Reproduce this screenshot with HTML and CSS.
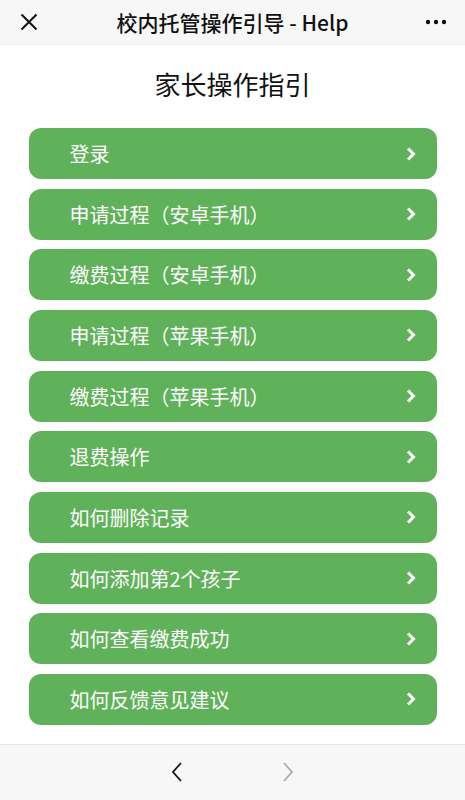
FILE: index.html
```html
<!DOCTYPE html>
<html lang="zh">
<head>
<meta charset="utf-8">
<link rel="stylesheet" href="styles.css">
</head>
<body>
<div class="page">
  <header class="topbar">
    <svg class="close" width="18" height="18" viewBox="0 0 18 18"><path d="M1.5 1.5 L16.5 16.5 M16.5 1.5 L1.5 16.5" stroke="#111" stroke-width="2" fill="none"/></svg>
    <div class="title">校内托管操作引导 - Help</div>
    <svg class="more" width="22" height="6" viewBox="0 0 22 6"><circle cx="3" cy="3" r="2.2" fill="#111"/><circle cx="11" cy="3" r="2.2" fill="#111"/><circle cx="19" cy="3" r="2.2" fill="#111"/></svg>
  </header>
  <main class="content">
    <h1 class="heading">家长操作指引</h1>
    <ul class="menu">
      <li class="item"><span>登录</span><svg class="chev" width="12" height="16" viewBox="0 0 12 16"><path d="M3 2.5 L8.5 8 L3 13.5" stroke="#fff" stroke-width="3" fill="none"/></svg></li>
      <li class="item"><span>申请过程（安卓手机）</span><svg class="chev" width="12" height="16" viewBox="0 0 12 16"><path d="M3 2.5 L8.5 8 L3 13.5" stroke="#fff" stroke-width="3" fill="none"/></svg></li>
      <li class="item"><span>缴费过程（安卓手机）</span><svg class="chev" width="12" height="16" viewBox="0 0 12 16"><path d="M3 2.5 L8.5 8 L3 13.5" stroke="#fff" stroke-width="3" fill="none"/></svg></li>
      <li class="item"><span>申请过程（苹果手机）</span><svg class="chev" width="12" height="16" viewBox="0 0 12 16"><path d="M3 2.5 L8.5 8 L3 13.5" stroke="#fff" stroke-width="3" fill="none"/></svg></li>
      <li class="item"><span>缴费过程（苹果手机）</span><svg class="chev" width="12" height="16" viewBox="0 0 12 16"><path d="M3 2.5 L8.5 8 L3 13.5" stroke="#fff" stroke-width="3" fill="none"/></svg></li>
      <li class="item"><span>退费操作</span><svg class="chev" width="12" height="16" viewBox="0 0 12 16"><path d="M3 2.5 L8.5 8 L3 13.5" stroke="#fff" stroke-width="3" fill="none"/></svg></li>
      <li class="item"><span>如何删除记录</span><svg class="chev" width="12" height="16" viewBox="0 0 12 16"><path d="M3 2.5 L8.5 8 L3 13.5" stroke="#fff" stroke-width="3" fill="none"/></svg></li>
      <li class="item"><span>如何添加第2个孩子</span><svg class="chev" width="12" height="16" viewBox="0 0 12 16"><path d="M3 2.5 L8.5 8 L3 13.5" stroke="#fff" stroke-width="3" fill="none"/></svg></li>
      <li class="item"><span>如何查看缴费成功</span><svg class="chev" width="12" height="16" viewBox="0 0 12 16"><path d="M3 2.5 L8.5 8 L3 13.5" stroke="#fff" stroke-width="3" fill="none"/></svg></li>
      <li class="item"><span>如何反馈意见建议</span><svg class="chev" width="12" height="16" viewBox="0 0 12 16"><path d="M3 2.5 L8.5 8 L3 13.5" stroke="#fff" stroke-width="3" fill="none"/></svg></li>
    </ul>
  </main>
  <footer class="bottombar">
    <svg class="nav" width="14" height="22" viewBox="0 0 14 22"><path d="M11 2 L3 11 L11 20" stroke="#111" stroke-width="1.8" fill="none"/></svg>
    <svg class="nav" width="14" height="22" viewBox="0 0 14 22"><path d="M3 2 L11 11 L3 20" stroke="#aaa" stroke-width="1.8" fill="none"/></svg>
  </footer>
</div>
</body>
</html>
```
FILE: styles.css
```css
* { box-sizing: border-box; }
html, body { margin: 0; padding: 0; }
body {
  font-family: "Noto Sans CJK SC", "Noto Sans", "Liberation Sans", sans-serif;
  background: #fff;
  width: 465px;
  height: 800px;
  overflow: hidden;
}
.page {
  display: flex;
  flex-direction: column;
  height: 800px;
}
.topbar {
  height: 45px;
  background: #f7f7f7;
  display: flex;
  align-items: center;
  padding: 0 18px 0 20px;
  border-bottom: 1px solid #ececec;
  flex-shrink: 0;
}
.close { flex-shrink: 0; }
.title {
  flex: 1;
  text-align: center;
  font-size: 21px;
  font-weight: 500;
  color: #111;
  padding-left: 2px;
}
.more { flex-shrink: 0; }
.content {
  flex: 1;
  display: flex;
  flex-direction: column;
  align-items: center;
}
.heading {
  margin: 24px 0 0;
  font-size: 26px;
  line-height: 30px;
  font-weight: 400;
  color: #111;
}
.menu {
  list-style: none;
  margin: 29px 0 0;
  padding: 0;
  width: 408px;
  display: flex;
  flex-direction: column;
  gap: 9.67px;
}
.item {
  height: 51px;
  background: #5fb25a;
  border-radius: 12px;
  display: flex;
  align-items: center;
  justify-content: space-between;
  padding: 0 20px 0 41px;
  color: #fff;
  font-size: 20px;
}
.bottombar {
  height: 56px;
  background: #f7f7f7;
  border-top: 1px solid #e4e4e4;
  display: flex;
  justify-content: center;
  align-items: center;
  gap: 97px;
  flex-shrink: 0;
  padding-bottom: 2px;
}
```
